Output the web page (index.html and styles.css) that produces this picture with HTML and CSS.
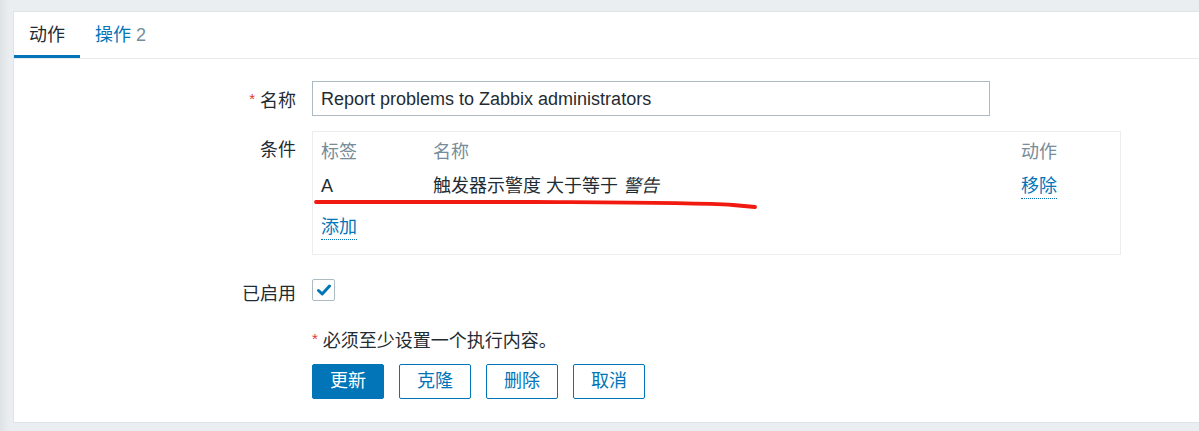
FILE: index.html
```html
<!DOCTYPE html>
<html lang="zh">
<head>
<meta charset="utf-8">
<link rel="stylesheet" href="styles.css">
</head>
<body>
<div class="panel">
  <div class="tabs">
    <div class="tab active">动作</div>
    <div class="tab">操作 <span class="count">2</span></div>
  </div>
  <div class="form">
    <div class="row row-name">
      <div class="label"><span class="req">*</span> 名称</div>
      <div class="field"><div class="input">Report problems to Zabbix administrators</div></div>
    </div>
    <div class="row row-cond">
      <div class="label">条件</div>
      <div class="field">
        <div class="cond-box">
          <div class="cond-row head">
            <div class="c1">标签</div><div class="c2">名称</div><div class="c3">动作</div>
          </div>
          <div class="cond-row">
            <div class="c1">A</div><div class="c2">触发器示警度 大于等于 <em>警告</em></div><div class="c3"><span class="link">移除</span></div>
          </div>
          <div class="add-row"><span class="link">添加</span></div>
          <svg class="scribble" width="450" height="14" viewBox="0 0 450 14"><path d="M3 4 C 60 4, 140 3.5, 220 4 S 380 4.5, 420 7 Q 436 8.5, 442 9" fill="none" stroke="#f01a10" stroke-width="3.8" stroke-linecap="round"/></svg>
        </div>
      </div>
    </div>
    <div class="row row-enabled">
      <div class="label">已启用</div>
      <div class="field">
        <div class="checkbox"><svg width="14" height="12" viewBox="0 0 14 12"><path d="M1.5 6.5 L5.2 10 L12.5 2" fill="none" stroke="#0275b8" stroke-width="3" stroke-linecap="round" stroke-linejoin="round"/></svg></div>
      </div>
    </div>
    <div class="row row-note">
      <div class="label"></div>
      <div class="field note"><span class="req">*</span> 必须至少设置一个执行内容。</div>
    </div>
    <div class="row row-buttons">
      <div class="label"></div>
      <div class="field buttons">
        <div class="btn primary">更新</div>
        <div class="btn">克隆</div>
        <div class="btn">删除</div>
        <div class="btn">取消</div>
      </div>
    </div>
  </div>
</div>
</body>
</html>
```
FILE: styles.css
```css
html, body {
  margin: 0;
  padding: 0;
}
body {
  width: 1199px;
  height: 431px;
  overflow: hidden;
  background: linear-gradient(to right, #dde2e5 0px, #e6e9ec 5px, #ebeef0 10px);
  font-family: "Liberation Sans", "Noto Sans CJK SC", sans-serif;
  font-size: 18px;
  color: #1f2c33;
}
.panel {
  margin: 11px 0 0 13px;
  width: 1200px;
  height: 410px;
  background: #fff;
  border: 1px solid #dfe4e7;
  border-right: none;
  box-sizing: content-box;
}
.tabs {
  display: flex;
  height: 46px;
  border-bottom: 1px solid #e6eaec;
}
.tab {
  padding: 3px 15px 0 15px;
  line-height: 40px;
  color: #0275b8;
  border-bottom: 3px solid transparent;
}
.tab.active {
  color: #1f2c33;
  border-bottom-color: #0275b8;
  width: 36px;
}
.tab .count {
  color: #768d99;
}
.form {
  padding-top: 22px;
}
.row {
  display: grid;
  grid-template-columns: 282px 1fr;
  column-gap: 16px;
}
.label {
  text-align: right;
  line-height: 35px;
  height: 35px;
}
.row-cond .label {
  padding-top: 2px;
}
.req {
  color: #e33734;
  font-size: 15px;
  vertical-align: 3px;
}
.input {
  width: 678px;
  height: 35px;
  box-sizing: border-box;
  border: 1px solid #acbbc2;
  padding: 1px 8px 0 8px;
  line-height: 33px;
}
.row-cond {
  margin-top: 15px;
}
.cond-box {
  position: relative;
  width: 809px;
  box-sizing: border-box;
  border: 1px solid #ebeef0;
  padding: 3px 8px 10px 8px;
}
.cond-row {
  display: grid;
  grid-template-columns: 112px 588px 1fr;
  height: 34px;
  line-height: 34px;
}
.cond-row.head {
  color: #768d99;
}
.cond-row em {
  font-style: italic;
}
.add-row {
  margin-top: 7px;
  height: 34px;
  line-height: 34px;
}
.link {
  color: #0275b8;
  border-bottom: 1px dotted #0275b8;
  padding-bottom: 2px;
}
.scribble {
  position: absolute;
  left: 0;
  top: 66px;
}
.row-enabled {
  margin-top: 21px;
}
.row-enabled .label {
  padding-top: 1px;
}
.checkbox {
  margin-top: 3px;
  width: 23px;
  height: 22px;
  box-sizing: border-box;
  border: 1px solid #acbbc2;
  border-radius: 2px;
  display: flex;
  align-items: center;
  justify-content: center;
}
.row-note {
  margin-top: 9px;
}
.note {
  line-height: 35px;
  height: 35px;
}
.row-buttons {
  margin-top: 8px;
}
.buttons {
  display: flex;
  gap: 15px;
}
.btn {
  width: 72px;
  height: 35px;
  box-sizing: border-box;
  border: 1px solid #0275b8;
  border-radius: 2px;
  color: #0275b8;
  text-align: center;
  line-height: 33px;
}
.btn.primary {
  background: #0275b8;
  color: #fff;
}
```
